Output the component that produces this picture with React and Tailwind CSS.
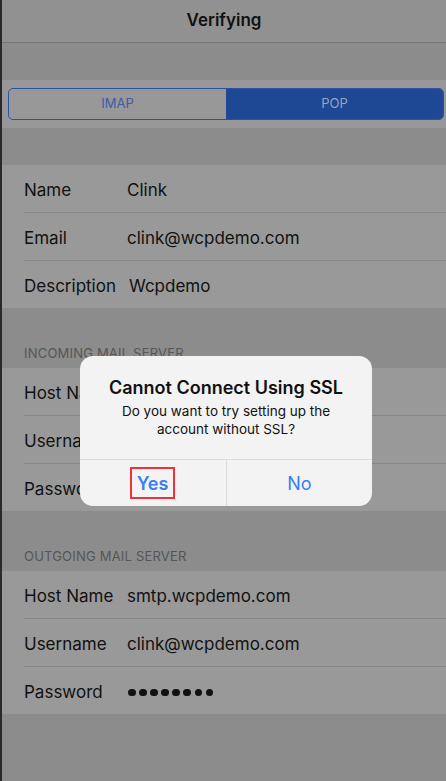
import React from "react";

const font = { fontFamily: "Inter, 'Liberation Sans', sans-serif" };

function Dots() {
  return (
    <span className="ml-[1px] flex items-center gap-[3.3px]">
      {Array.from({ length: 8 }).map((_, i) => (
        <span key={i} className="h-[7.8px] w-[7.8px] rounded-full bg-[#111]" />
      ))}
    </span>
  );
}

function Row({ label, value, last, valueClass = "" }) {
  return (
    <div className="pl-[22px]">
      <div className={`flex items-center pt-[4px] ${last ? "h-[47px]" : "h-[48px] border-b border-[#878787]"}`}>
        <span className="w-[103px] shrink-0 text-[17px] text-[#111]">{label}</span>
        <span className={`text-[17px] text-[#111] ${valueClass}`}>{value}</span>
      </div>
    </div>
  );
}

function Section({ title, rows }) {
  return (
    <div>
      {title && (
        <div className="flex h-[60px] items-end pb-[5px] pl-[22px] text-[13px] uppercase tracking-[0.2px] text-[#565656]">
          {title}
        </div>
      )}
      <div className="bg-[#999999]">
        {rows.map((r, i) => (
          <Row key={r[0]} label={r[0]} value={r[1]} last={i === rows.length - 1} valueClass={r[2]} />
        ))}
      </div>
    </div>
  );
}

export default function App() {
  return (
    <div className="relative flex h-[781px] w-[446px] overflow-hidden" style={font}>
      <div className="w-[2px] shrink-0 bg-[#2a2a2a]" />
      <div className="flex flex-1 flex-col bg-[#8c8c8c]">
        {/* nav bar */}
        <div className="flex h-[43px] items-center justify-center border-b border-[#767676] bg-[#919191]">
          <span className="text-[17px] font-semibold text-[#111]">Verifying</span>
        </div>

        <div className="h-[37px]" />

        {/* segmented control */}
        <div className="flex h-[48px] items-center bg-[#989898] pl-[6px] pr-[2px]">
          <div className="flex h-[32px] w-full overflow-hidden rounded-[5px] border border-[#2d52a0]">
            <div className="flex flex-1 items-center justify-center text-[13px] text-[#3b5ea6]">IMAP</div>
            <div className="flex flex-1 items-center justify-center bg-[#1e4894] text-[13px] text-[#97a3bd]">POP</div>
          </div>
        </div>

        <div className="h-[37px]" />

        <Section
          rows={[
            ["Name", "Clink"],
            ["Email", "clink@wcpdemo.com"],
            ["Description", "Wcpdemo", "ml-[2px]"],
          ]}
        />
        <Section
          title="Incoming Mail Server"
          rows={[
            ["Host Name", "pop.wcpdemo.com"],
            ["Username", "clink@wcpdemo.com"],
            ["Password", <Dots />],
          ]}
        />
        <Section
          title="Outgoing Mail Server"
          rows={[
            ["Host Name", "smtp.wcpdemo.com"],
            ["Username", "clink@wcpdemo.com"],
            ["Password", <Dots />],
          ]}
        />
      </div>

      {/* alert */}
      <div className="absolute left-[80px] top-[356px] w-[292px] overflow-hidden rounded-[13px] bg-[#f3f3f3]">
        <div className="px-[16px] pb-[21px] pt-[21px] text-center">
          <div className="text-[18px] font-semibold leading-[22px] text-[#111]">Cannot Connect Using SSL</div>
          <div className="mt-[3px] text-[13.5px] leading-[18px] text-[#111]">
            Do you want to try setting up the
            <br />
            account without SSL?
          </div>
        </div>
        <div className="flex h-[47px] border-t border-[#dcdcdc]">
          <div className="flex flex-1 items-center justify-center border-r border-[#dcdcdc] pr-[1px]">
            <span className="flex h-[32px] w-[45px] items-center justify-center border-2 border-[#ee3338] text-[18px] font-semibold text-[#3a7ef4]">
              Yes
            </span>
          </div>
          <div className="flex flex-1 items-center justify-center text-[18px] text-[#3a7ef4]">No</div>
        </div>
      </div>
    </div>
  );
}
